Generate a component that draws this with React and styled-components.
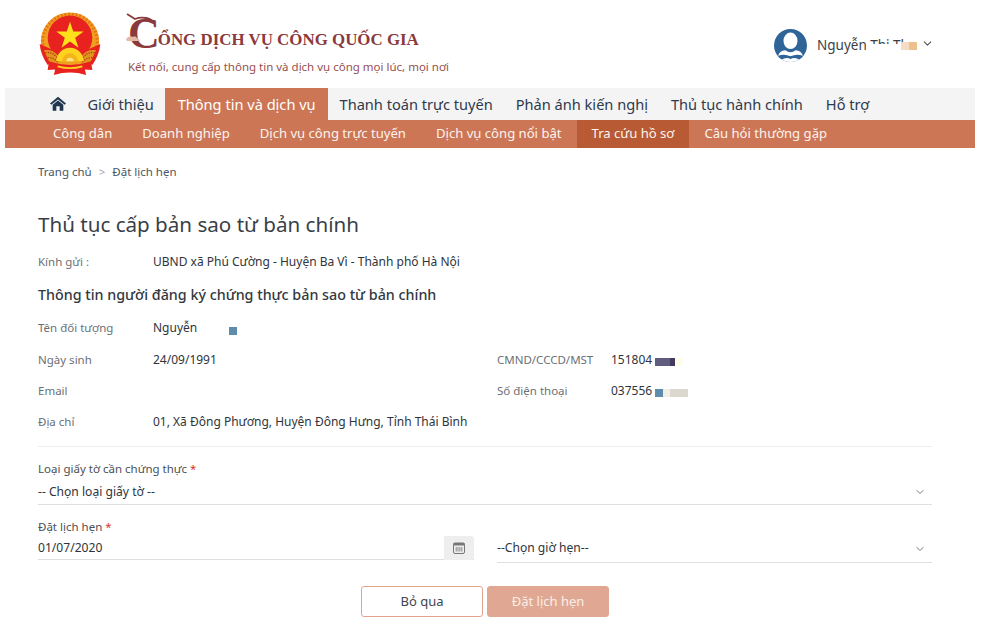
import React from "react";
import styled, { createGlobalStyle } from "styled-components";
import { ChevronDown } from "lucide-react";

const GlobalStyle = createGlobalStyle`
  body {
    margin: 0;
    background: #fff;
    font-family: "Noto Sans", "Open Sans", sans-serif;
    color: #3a3f47;
  }
`;

const Page = styled.div`
  width: 970px;
  margin-left: 5px;
`;

// header
const Header = styled.header`
  height: 88px;
  display: flex;
  align-items: flex-start;
  padding-left: 34px;
`;

const Emblem = styled.svg`
  width: 62px;
  height: 64px;
  margin-top: 12px;
  flex: none;
`;

const Brand = styled.div`
  margin-left: 27px;
  margin-top: 15px;
  width: 560px;
  flex: none;
`;

const BrandTitle = styled.div`
  display: flex;
  align-items: flex-end;
  height: 38px;
  font-family: "Liberation Serif", serif;
  font-weight: 700;
  font-size: 16.9px;
  color: #8a3a3c;
  white-space: nowrap;
`;

const BigC = styled.span`
  position: relative;
  font-size: 44px;
  line-height: 38px;
  margin-right: -2px;
`;

const Crane = styled.svg`
  position: absolute;
  left: -2px;
  top: -3px;
  width: 30px;
  height: 38px;
`;

const TitleRest = styled.span`
  line-height: 22px;
  padding-bottom: 2px;
`;

const Slogan = styled.div`
  margin-top: 5px;
  font-size: 11.5px;
  line-height: 18px;
  color: #96504f;
`;

const User = styled.div`
  margin-left: 86px;
  margin-top: 29px;
  display: flex;
  align-items: center;
  position: relative;
`;

const Avatar = styled.svg`
  width: 33px;
  height: 33px;
  flex: none;
`;

const UserName = styled.span`
  position: relative;
  width: 100px;
  margin-left: 10px;
  font-size: 13.5px;
  line-height: 20px;
  margin-top: -2px;
  white-space: nowrap;
`;

const NameMask = styled.span`
  position: absolute;
  left: 49px;
  right: -6px;
  top: 9px;
  height: 11px;
  background: #fff;
`;

const NamePatch = styled.span`
  position: absolute;
  right: 0;
  top: 7px;
  width: 16px;
  height: 8px;
  background: linear-gradient(90deg, #f6dcc3 50%, #eec08e 50%);
`;

const Caret = styled(ChevronDown)`
  margin-left: 4px;
  margin-top: -4px;
  color: #555;
`;

// nav
const MainNav = styled.nav`
  height: 32px;
  background: #f4f4f4;
  display: flex;
  padding-left: 45px;
`;

const HomeIcon = styled.svg`
  width: 16px;
  height: 15px;
  margin: 8px 10px 0 0;
  flex: none;
`;

const MainItem = styled.a`
  padding: 0 ${p => (p.$active ? 12.4 : 11.5)}px;
  font-size: 14.6px;
  line-height: 33px;
  white-space: nowrap;
  color: ${p => (p.$active ? "#fff" : "#2e3a4d")};
  background: ${p => (p.$active ? "#cc7656" : "transparent")};
`;

const SubNav = styled.nav`
  height: 28px;
  background: #cc7656;
  display: flex;
  padding-left: 33px;
`;

const SubItem = styled.a`
  padding: 0 15px;
  font-size: 13.1px;
  line-height: 27px;
  white-space: nowrap;
  color: #fdf3ee;
  background: ${p => (p.$active ? "#b85a34" : "transparent")};
`;

// main content
const Content = styled.main`
  padding: 15px 43px 0 33px;
`;

const Breadcrumb = styled.div`
  display: flex;
  gap: 7px;
  font-size: 11.5px;
  line-height: 18px;
  color: #4b5563;
`;

const Sep = styled.span`
  color: #a3a3a3;
`;

const Title = styled.h1`
  margin: 28px 0 0;
  font-size: 20.6px;
  line-height: 30px;
  font-weight: 400;
  color: #3a3f47;
`;

const SendRow = styled.div`
  display: grid;
  grid-template-columns: 115px 1fr;
  margin-top: 13px;
  line-height: 20px;
`;

const SubTitle = styled.h2`
  margin: 13px 0 0;
  font-size: 14.3px;
  line-height: 20px;
  font-weight: 500;
  color: #33383f;
`;

const InfoGrid = styled.div`
  display: grid;
  grid-template-columns: 115px 344px 114px 1fr;
  grid-auto-rows: 31.4px;
  align-items: center;
  margin-top: 7px;
  padding-bottom: 8px;
  border-bottom: 1px solid #eeeeee;
`;

const Label = styled.span`
  font-size: 11.5px;
  color: #6b7076;
`;

const Value = styled.span`
  position: relative;
  font-size: 12px;
  color: #2f343a;
  white-space: nowrap;
`;

const Blur = styled.span`
  display: inline-block;
  vertical-align: ${p => p.$drop || 0}px;
  margin-left: ${p => p.$gap || 0}px;
  width: ${p => p.$w}px;
  height: 8px;
  background: ${p => p.$bg};
`;

const Field = styled.div`
  margin-top: ${p => p.$top || 0}px;
`;

const FieldLabel = styled.label`
  display: block;
  font-size: 11.5px;
  line-height: 18px;
  color: #4b5056;
`;

const Req = styled.span`
  color: #d9342b;
`;

const SelectLine = styled.div`
  display: flex;
  align-items: center;
  justify-content: space-between;
  box-sizing: border-box;
  height: ${p => p.$h || 27}px;
  padding: 1px 6px 0 0;
  border-bottom: 1px solid #dfdfdf;
  font-size: 12.1px;
  color: #2f343a;
`;

const SelectCaret = styled(ChevronDown)`
  color: #777;
  margin-top: 2px;
`;

const DateRow = styled.div`
  display: grid;
  grid-template-columns: 436px 435px;
  column-gap: 23px;
  margin-top: 13px;
  align-items: start;
`;

const DateInput = styled.div`
  display: flex;
  align-items: stretch;
  height: 23px;
  border-bottom: 1px solid #dfdfdf;
  font-size: 12.1px;
  color: #2f343a;
`;

const DateText = styled.span`
  flex: 1;
  line-height: 23px;
`;

const CalButton = styled.span`
  width: 30px;
  margin-bottom: -1px;
  background: #eeeeee;
  border-radius: 0 3px 3px 0;
  display: flex;
  align-items: center;
  justify-content: center;
`;

const CalIcon = styled.svg`
  width: 12px;
  height: 12px;
`;

const TimeSelect = styled.div`
  margin-top: 15px;
`;

const Actions = styled.div`
  display: flex;
  justify-content: center;
  gap: 4px;
  margin-top: 23px;
`;

const Button = styled.button`
  width: 122px;
  height: 31px;
  box-sizing: border-box;
  border-radius: 3px;
  font-family: inherit;
  font-size: 13px;
  padding: 0;
  border: 1px solid ${p => (p.$primary ? "#e0a893" : "#e3a48d")};
  background: ${p => (p.$primary ? "#e0a893" : "#fff")};
  color: ${p => (p.$primary ? "#fbeee8" : "#3f4650")};
`;

const starPoints = "50,14 55.2,30 72,30 58.4,40 63.6,56 50,46 36.4,56 41.6,40 28,30 44.8,30";

function App() {
  return (
    <Page>
      <GlobalStyle />
      <Header>
        <Emblem viewBox="0 0 100 100">
          <circle cx="50" cy="46" r="47" fill="#f0a020" />
          <circle cx="50" cy="46" r="44" fill="none" stroke="#e8741a" strokeWidth="5" strokeDasharray="3 3" />
          <circle cx="50" cy="40" r="36" fill="#e8231f" />
          <polygon points={starPoints} fill="#ffe01a" />
          <path d="M1 50 L24 60 L30 72 L14 84 Q3 68 1 50Z" fill="#e8231f" />
          <path d="M99 50 L76 60 L70 72 L86 84 Q97 68 99 50Z" fill="#e8231f" />
          <path d="M8 60 Q22 58 30 68 L34 84 L18 82Z" fill="#e0961c" />
          <path d="M92 60 Q78 58 70 68 L66 84 L82 82Z" fill="#e0961c" />
          <path d="M10 64 Q22 62 29 72 M14 72 Q24 72 31 80" stroke="#b5301a" strokeWidth="2" strokeDasharray="2 2" fill="none" />
          <path d="M90 64 Q78 62 71 72 M86 72 Q76 72 69 80" stroke="#b5301a" strokeWidth="2" strokeDasharray="2 2" fill="none" />
          <path d="M28 78 A22 22 0 0 1 72 78Z" fill="#ffd21f" />
          <path d="M37 78 A13 13 0 0 1 63 78Z" fill="#f5b51a" />
          <path d="M44 78 A6 6 0 0 1 56 78Z" fill="#ffe680" />
          <path d="M16 78 Q50 90 84 78 L86 92 L74 91 L76 100 Q50 92 24 100 L26 91 L14 92Z" fill="#e8231f" />
          <path d="M30 86 Q50 92 70 86" stroke="#ffd21f" strokeWidth="3" fill="none" />
        </Emblem>
        <Brand>
          <BrandTitle>
            <BigC>
              C
              <Crane viewBox="0 0 30 38">
                <path d="M1 2 L9 7 Q14 5 20 6 Q26 7 27 11 L22 9 Q15 8 11 10 Q7 13 6 19" fill="none" stroke="#8a3a3c" strokeWidth="1.8" />
                <path d="M0 27 Q3 23 7 25 Q9 23 11 26 Q13 27 14 29 L1 29Z" fill="#e3b9a6" />
              </Crane>
            </BigC>
            <TitleRest>ỔNG DỊCH VỤ CÔNG QUỐC GIA</TitleRest>
          </BrandTitle>
          <Slogan>Kết nối, cung cấp thông tin và dịch vụ công mọi lúc, mọi nơi</Slogan>
        </Brand>
        <User>
          <Avatar viewBox="0 0 32 32">
            <defs>
              <clipPath id="avatarClip">
                <circle cx="16" cy="16" r="16" />
              </clipPath>
            </defs>
            <circle cx="16" cy="16" r="16" fill="#2f6499" />
            <g clipPath="url(#avatarClip)">
              <ellipse cx="16" cy="11.5" rx="6.8" ry="8" fill="#fff" />
              <path d="M4 26 Q5 21 11 20.5 Q13.5 22.5 16 22.5 Q18.5 22.5 21 20.5 Q27 21 28 26 Q22 23.5 16 26.5 Q10 23.5 4 26Z" fill="#fff" />
              <path d="M7 30 Q11.5 27 16 29 Q20.5 27 25 30 L23 33 L9 33Z" fill="#fff" />
            </g>
          </Avatar>
          <UserName>
            Nguyễn Thị Thu
            <NameMask />
            <NamePatch />
          </UserName>
          <Caret size={13} />
        </User>
      </Header>

      <MainNav>
        <HomeIcon viewBox="0 0 24 22">
          <path d="M12 1 L24 11 L22 13 L12 5 L2 13 L0 11Z" fill="#1f3550" />
          <path d="M4 13 L12 6.5 L20 13 V22 H14.5 V15 H9.5 V22 H4Z" fill="#1f3550" />
        </HomeIcon>
        <MainItem>Giới thiệu</MainItem>
        <MainItem $active>Thông tin và dịch vụ</MainItem>
        <MainItem>Thanh toán trực tuyến</MainItem>
        <MainItem>Phản ánh kiến nghị</MainItem>
        <MainItem>Thủ tục hành chính</MainItem>
        <MainItem>Hỗ trợ</MainItem>
      </MainNav>
      <SubNav>
        <SubItem>Công dân</SubItem>
        <SubItem>Doanh nghiệp</SubItem>
        <SubItem>Dịch vụ công trực tuyến</SubItem>
        <SubItem>Dịch vụ công nổi bật</SubItem>
        <SubItem $active>Tra cứu hồ sơ</SubItem>
        <SubItem>Câu hỏi thường gặp</SubItem>
      </SubNav>

      <Content>
        <Breadcrumb>
          <span>Trang chủ</span>
          <Sep>&gt;</Sep>
          <span>Đặt lịch hẹn</span>
        </Breadcrumb>
        <Title>Thủ tục cấp bản sao từ bản chính</Title>
        <SendRow>
          <Label>Kính gửi :</Label>
          <Value>UBND xã Phú Cường - Huyện Ba Vì - Thành phố Hà Nội</Value>
        </SendRow>
        <SubTitle>Thông tin người đăng ký chứng thực bản sao từ bản chính</SubTitle>

        <InfoGrid>
          <Label>Tên đối tượng</Label>
          <Value>
            Nguyễn
            <Blur $w={8} $bg="#5f8cad" $gap={32} $drop={-3} />
          </Value>
          <span />
          <span />

          <Label>Ngày sinh</Label>
          <Value>24/09/1991</Value>
          <Label>CMND/CCCD/MST</Label>
          <Value>
            151804
            <Blur $w={27} $gap={3} $bg="linear-gradient(90deg, #5f5c80 0 55%, #443b5c 55% 75%, #fffde8 75%)" $drop={-2} />
          </Value>

          <Label>Email</Label>
          <span />
          <Label>Số điện thoại</Label>
          <Value>
            037556
            <Blur $w={33} $gap={3} $bg="linear-gradient(90deg, #5f8cad 0 25%, #f2efe9 25% 45%, #dcd8d0 45%)" $drop={-2} />
          </Value>

          <Label>Địa chỉ</Label>
          <Value>01, Xã Đông Phương, Huyện Đông Hưng, Tỉnh Thái Bình</Value>
          <span />
          <span />
        </InfoGrid>

        <Field $top={13}>
          <FieldLabel>Loại giấy tờ cần chứng thực <Req>*</Req></FieldLabel>
          <SelectLine>
            -- Chọn loại giấy tờ --
            <SelectCaret size={12} />
          </SelectLine>
        </Field>

        <DateRow>
          <div>
            <FieldLabel>Đặt lịch hẹn <Req>*</Req></FieldLabel>
            <DateInput>
              <DateText>01/07/2020</DateText>
              <CalButton>
                <CalIcon viewBox="0 0 12 12">
                  <rect x="0.5" y="1" width="11" height="10.5" rx="1.5" fill="none" stroke="#777" />
                  <rect x="0.5" y="1" width="11" height="2.5" fill="#777" />
                  <path d="M3.2 5 V9.5 M5 5 V9.5 M6.9 5 V9.5 M8.8 5 V9.5" stroke="#888" strokeWidth="1" />
                </CalIcon>
              </CalButton>
            </DateInput>
          </div>
          <TimeSelect>
            <SelectLine $h={30}>
              --Chọn giờ hẹn--
              <SelectCaret size={12} />
            </SelectLine>
          </TimeSelect>
        </DateRow>

        <Actions>
          <Button>Bỏ qua</Button>
          <Button $primary>Đặt lịch hẹn</Button>
        </Actions>
      </Content>
    </Page>
  );
}

export default App;
